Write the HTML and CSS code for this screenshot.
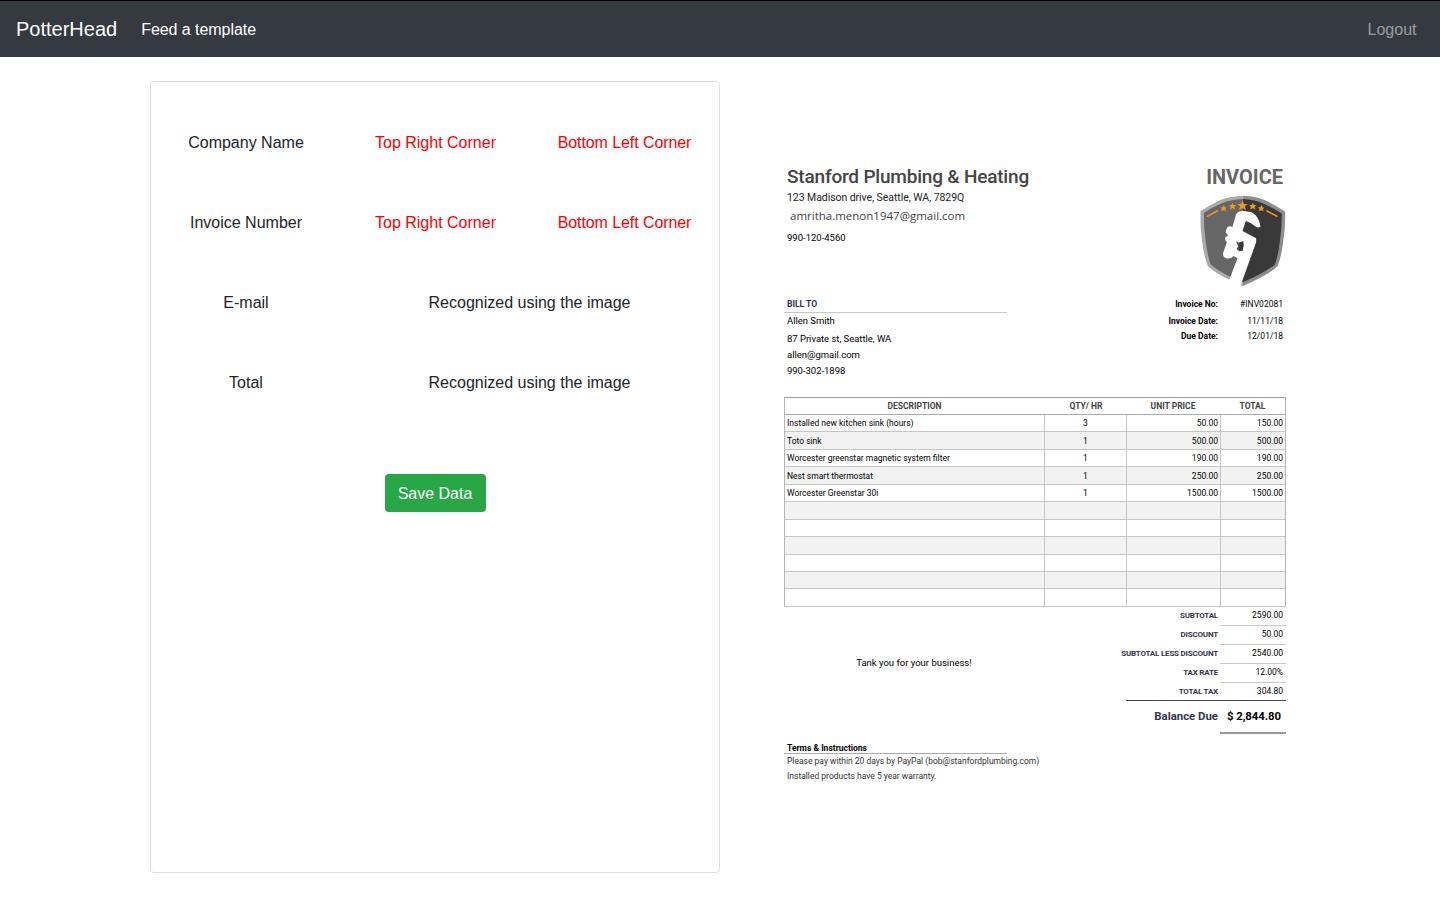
FILE: index.html
```html
<!DOCTYPE html>
<html lang="en">
<head>
<meta charset="utf-8">
<title>PotterHead</title>
<link rel="stylesheet" href="styles.css">
</head>
<body>
<nav class="navbar">
  <a class="brand">PotterHead</a>
  <a class="nav-link">Feed a template</a>
  <a class="nav-link logout">Logout</a>
</nav>
<main class="container">
  <section class="card">
    <div class="field"><span>Company Name</span><span class="pick">Top Right Corner</span><span class="pick corner-left">Bottom Left Corner</span></div>
    <div class="field"><span>Invoice Number</span><span class="pick">Top Right Corner</span><span class="pick corner-left">Bottom Left Corner</span></div>
    <div class="field"><span>E-mail</span><span class="wide">Recognized using the image</span></div>
    <div class="field"><span>Total</span><span class="wide">Recognized using the image</span></div>
    <button class="save">Save Data</button>
  </section>
  <article class="invoice">
    <header class="head">
      <div class="company">
        <h1 class="name">Stanford Plumbing &amp; Heating</h1>
        <p class="address">123 Madison drive, Seattle, WA, 7829Q</p>
        <p class="email">amritha.menon1947@gmail.com</p>
        <p class="phone">990-120-4560</p>
      </div>
      <div class="mark">
        <h2 class="invoice-title">INVOICE</h2>
        <svg class="logo" viewBox="60 120 260 276">
          <path fill="#aaa" d="M188 122Q152 123 120 135Q91 150 61 168Q60 220 66 260Q72 305 83 334Q108 357 148 374L188 393Z"/>
          <path fill="#8d8d8d" d="M188 122Q226 123 255 136Q286 151 315 170Q316 220 309 260Q304 305 292 334Q264 361 188 393Z"/>
          <path fill="#666" d="M188 132Q151 134 122 146Q95 157 71 174Q71 220 77 260Q82 300 91 328Q115 349 150 365L188 382Z"/>
          <path fill="#393939" d="M188 132Q225 134 252 147Q280 159 305 176Q305 220 299 260Q294 302 284 329Q254 354 188 382Z"/>
          <path fill="#fff" d="M167 180Q172 168 187 167L215 172Q238 186 241 216Q230 220 224 213Q212 202 197 198L187 228L228 250V262L181 392L146 378L172 310L160 303Q150 315 134 308Q125 301 131 288L140 262Q132 256 136 246L144 242L136 231L141 217Q149 211 157 216Z"/>
          <path fill="#505050" d="M168 259L177 263L189 259L190 272L187 287L177 289L169 282L174 274Z"/>
          <path fill="#393939" d="M177 263L189 259L190 272L187 287L177 284Z"/>
          <path fill="#f39a14" d="M187 136L191 147L203 147L194 154L198 166L187 159L176 166L180 154L171 147L183 147ZM157 143L160 150L168 150L162 155L165 164L157 159L149 164L151 155L146 150L154 150ZM218 143L221 150L229 150L223 155L226 164L218 159L210 164L212 155L207 150L215 150ZM131 150L134 157L140 158L135 162L137 169L130 166L123 169L125 162L121 157L128 157ZM244 150L247 157L253 158L248 162L250 169L243 166L236 169L238 162L234 157L241 157ZM78 184L111 165L116 168L82 186ZM260 165L294 183L290 186L257 169Z"/>
        </svg>
      </div>
    </header>
    <div class="parties">
      <div class="bill">
        <h3 class="bill-title">BILL TO</h3>
        <p class="bill-name">Allen Smith</p>
        <p class="bill-street">87 Private st, Seattle, WA</p>
        <p class="bill-mail">allen@gmail.com</p>
        <p class="bill-phone">990-302-1898</p>
      </div>
      <dl class="meta">
        <dt>Invoice No:</dt><dd>#INV02081</dd>
        <dt>Invoice Date:</dt><dd>11/11/18</dd>
        <dt>Due Date:</dt><dd>12/01/18</dd>
      </dl>
    </div>
    <div class="items">
      <div class="row thead"><span>DESCRIPTION</span><span>QTY/ HR</span><span>UNIT PRICE</span><span>TOTAL</span></div>
      <div class="row"><span>Installed new kitchen sink (hours)</span><span>3</span><span>50.00</span><span>150.00</span></div>
      <div class="row"><span>Toto sink</span><span>1</span><span>500.00</span><span>500.00</span></div>
      <div class="row"><span>Worcester greenstar magnetic system filter</span><span>1</span><span>190.00</span><span>190.00</span></div>
      <div class="row"><span>Nest smart thermostat</span><span>1</span><span>250.00</span><span>250.00</span></div>
      <div class="row"><span>Worcester Greenstar 30i</span><span>1</span><span>1500.00</span><span>1500.00</span></div>
      <div class="row"><span></span><span></span><span></span><span></span></div>
      <div class="row"><span></span><span></span><span></span><span></span></div>
      <div class="row"><span></span><span></span><span></span><span></span></div>
      <div class="row"><span></span><span></span><span></span><span></span></div>
      <div class="row"><span></span><span></span><span></span><span></span></div>
      <div class="row"><span></span><span></span><span></span><span></span></div>
    </div>
    <div class="summary">
      <p class="thanks">Tank you for your business!</p>
      <div class="totals">
        <div class="sum"><b>SUBTOTAL</b><span>2590.00</span></div>
        <div class="sum"><b>DISCOUNT</b><span>50.00</span></div>
        <div class="sum"><b>SUBTOTAL LESS DISCOUNT</b><span>2540.00</span></div>
        <div class="sum"><b>TAX RATE</b><span>12.00%</span></div>
        <div class="sum last"><b>TOTAL TAX</b><span>304.80</span></div>
        <div class="balance"><b>Balance Due</b><strong>$ 2,844.80</strong></div>
      </div>
    </div>
    <footer class="terms">
      <h3 class="terms-title">Terms &amp; Instructions</h3>
      <p>Please pay within 20 days by PayPal (bob@stanfordplumbing.com)</p>
      <p>Installed products have 5 year warranty.</p>
    </footer>
  </article>
</main>
</body>
</html>
```
FILE: styles.css
```css
* { box-sizing: border-box; }
body { margin: 0; background: #fff; color: #212529; font: 16px/24px "Liberation Sans", Arial, sans-serif; }
h1, h2, h3, p, dl, dd { margin: 0; }
.navbar { display: flex; align-items: center; height: 57px; padding: 0 16px; border-top: 1px solid #000; background: #343a40; color: #fff; }
.brand { font-size: 20px; line-height: 30px; margin-right: 16px; }
.nav-link { padding: 9px 8px 7px; letter-spacing: -.05px; }
.logout { margin-left: auto; padding-right: 7.5px; color: rgba(255, 255, 255, .5); letter-spacing: 0; }
.container { display: grid; grid-template-columns: 570px 570px; width: 1140px; margin: 24px auto 0; }
.card { height: 792px; padding-top: 49px; border: 1px solid rgba(0, 0, 0, .125); border-radius: 4px; text-align: center; }
.field { display: grid; grid-template-columns: 190px 189px 189px; margin-bottom: 56px; }
.pick { color: red; }
.corner-left { letter-spacing: -.08px; }
.wide { grid-column: span 2; padding-right: 1px; }
.save { margin-top: 23px; width: 101px; height: 38px; padding: 8px 12px 6px; border: 0; border-radius: 4px; background: #28a745; color: #fff; font: inherit; }

.invoice { width: 502px; margin: 83px 0 0 64px; color: #000; font: 8.5px/16px Roboto, sans-serif; white-space: nowrap; }
.head { display: flex; justify-content: space-between; height: 132px; padding-left: 3px; }
.name { font-size: 19px; line-height: 25px; height: 24px; letter-spacing: -.19px; font-weight: 500; color: #444; }
.address { font-size: 10.5px; line-height: 19px; letter-spacing: -.06px; color: #222; }
.email { padding-left: 3px; font: 11.5px/18px "Open Sans", sans-serif; height: 19px; color: #444; }
.phone { font-size: 9.5px; line-height: 23px; }
.mark { width: 86px; }
.invoice-title { padding-right: 3px; font-size: 20px; line-height: 27px; font-weight: 700; color: #666; text-align: right; }
.logo { display: block; width: 87px; height: 92px; margin-top: 4px; }
.parties { display: flex; justify-content: space-between; height: 101px; }
.bill { width: 223px; font-size: 9.5px; letter-spacing: -.03px; }
.bill p, .bill-title { padding-left: 3px; }
.bill-title { height: 17px; border-bottom: 1px solid #c8c8c8; font-size: 8.6px; font-weight: 700; color: #333050; }
.bill-street { line-height: 19px; }
.bill-mail { height: 16px; line-height: 13px; }
.bill-phone { line-height: 13px; }
.meta { display: grid; grid-template-columns: 100px 65px; grid-template-rows: 17px 15px 16px; padding-right: 3px; text-align: right; }
.meta dt { font-weight: 700; }
.items { border: 1px solid #b5b5b5; border-top-color: #999; border-bottom-color: #c6c6c6; }
.row { display: grid; grid-template-columns: 259px 82px 94px 65px; height: 17.45px; line-height: 17.6px; border-bottom: 1px solid #c6c6c6; }
.row:last-child { border-bottom: 0; height: 17px; }
.row:nth-child(odd):not(.thead) { background: #f2f2f2; line-height: 19px; }
.row span { padding: 0 2px; }
.row span + span { border-left: 1px solid #c6c6c6; text-align: right; }
.row span:nth-child(2) { padding-right: 2px; text-align: center; }
.row.thead { height: 17px; line-height: 17px; border-color: #aaa; font-weight: 700; color: #444; }
.row.thead span { border: 0; text-align: center; }
.row.thead span:nth-child(2) { padding-left: 4px; }
.summary { display: grid; grid-template-columns: 260px 242px; }
.thanks { margin-top: 48px; text-align: center; font-size: 9.5px; }
.totals { text-align: right; }
.sum { display: grid; grid-template-columns: 176px 66px; height: 18.8px; line-height: 17px; }
.sum b { padding-right: 2px; font-size: 8px; letter-spacing: -.2px; color: #34344a; }
.sum span { padding-right: 3px; border-bottom: 1px solid #c8c8c8; }
.sum.last { position: relative; }
.sum.last::after { position: absolute; right: 0; bottom: 0; width: 160px; height: 1px; background: #444; content: ""; }
.balance { display: grid; grid-template-columns: 176px 66px; height: 33px; line-height: 31px; font-size: 11.4px; }
.balance b { padding-right: 2px; color: #34344a; }
.balance strong { padding-right: 5px; border-bottom: 2px solid #999; letter-spacing: -.06px; }
.terms { margin-top: 8px; color: #333; line-height: 15px; }
.terms > * { padding-left: 3px; }
.terms-title { width: 223px; height: 12px; line-height: 12px; border-bottom: 1px solid #aaa; font-size: 8.5px; color: #000; }
```
